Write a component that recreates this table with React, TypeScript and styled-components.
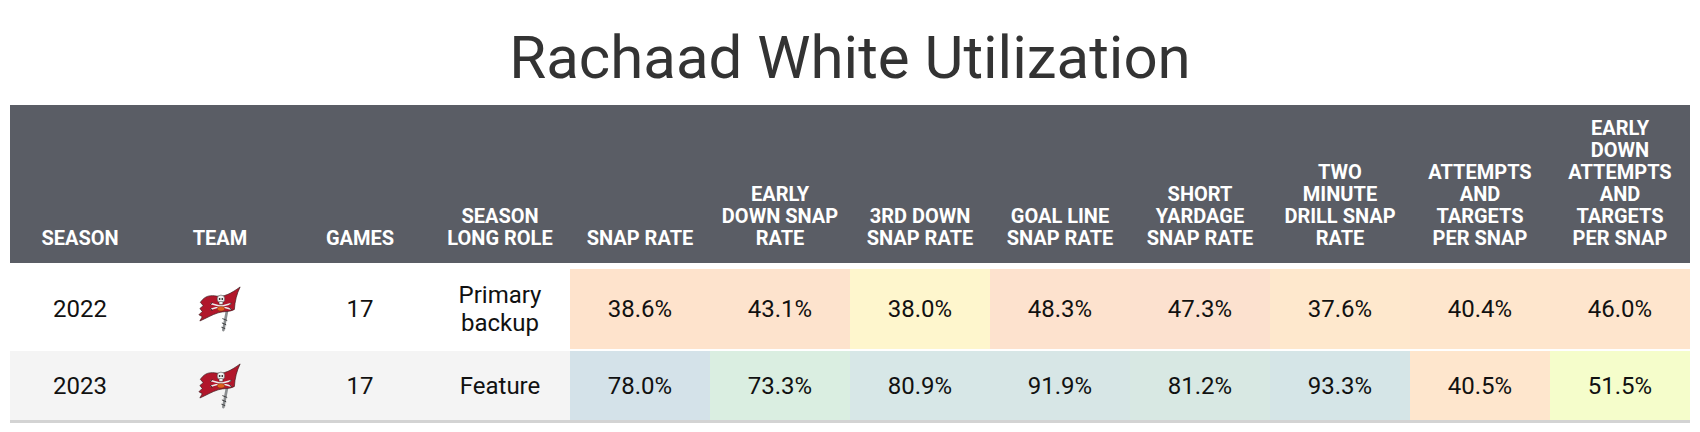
import React from 'react';
import styled, { createGlobalStyle } from 'styled-components';

const GlobalStyle = createGlobalStyle`
  body {
    margin: 0;
    background: #ffffff;
    font-family: Roboto, 'Liberation Sans', Arial, sans-serif;
  }
`;

const Page = styled.div`
  padding: 0 10px;
`;

const Title = styled.h1`
  margin: 0;
  padding-top: 22px;
  margin-bottom: 12px;
  text-align: center;
  font-family: Roboto, 'Liberation Sans', sans-serif;
  font-weight: 400;
  font-size: 60px;
  line-height: normal;
  color: #333333;
`;

const Table = styled.table`
  width: 1680px;
  table-layout: fixed;
  border-collapse: separate;
  border-spacing: 0;
  border-bottom: 3px solid #d3d3d3;
`;

const HeadCell = styled.th`
  box-sizing: border-box;
  width: 140px;
  background: #5a5d65;
  color: #ffffff;
  font-family: Roboto, 'Liberation Sans', sans-serif;
  font-weight: 700;
  font-size: 20px;
  line-height: 22px;
  text-transform: uppercase;
  text-align: center;
  vertical-align: bottom;
  padding: 12px 10px 14px;
`;

const Row = styled.tr<{ gap: number }>`
  & > td {
    border-top: ${({ gap }) => gap}px solid #ffffff;
  }
`;

const Cell = styled.td<{ bg: string }>`
  box-sizing: border-box;
  background: ${({ bg }) => bg};
  color: #111111;
  font-family: Roboto, 'Liberation Sans', sans-serif;
  font-weight: 400;
  font-size: 24px;
  line-height: 28px;
  text-align: center;
  vertical-align: middle;
  padding: 12px 10px;
`;

const LogoWrap = styled.div`
  display: flex;
  justify-content: center;
  align-items: center;
  height: 45px;
`;

const BucsLogo = () => (
  <svg width="46" height="46" viewBox="10 2 46 48">
    {/* pole / sword hilt */}
    <path d="M40.5 27 L36.5 48" stroke="#8b8e90" strokeWidth="2.8" strokeLinecap="round" />
    <path d="M35.5 36 L40.5 38 M35 40.5 L39.5 42.5 M34.5 45 L38.5 46.5" stroke="#3b3c3e" strokeWidth="1" />
    {/* flag */}
    <path
      d="M15 16 C19 12 24 11.5 29 12.5 C37 14 45 9.5 54 3 C50.5 10 48.5 18 48 26.5 C43 29.5 37 28 31 30 C24.5 32 19 35.5 12 38.5 L14.5 34 L11 32 L14.5 28.5 L12 25.5 L15.5 22.5 L12.5 19 Z"
      fill="#b1172b"
      stroke="#3a1a1c"
      strokeWidth="0.7"
    />
    {/* swords */}
    <path d="M24 26 L44 20.5 M24 20.5 L44 26" stroke="#ececec" strokeWidth="1.4" strokeLinecap="round" />
    <path d="M23 25 L25 28 M23 21.5 L25 19 M45 19.5 L43 22 M45 27 L43 24.5" stroke="#2b2b2b" strokeWidth="1" />
    {/* skull */}
    <circle cx="34" cy="15.5" r="4" fill="#f4f4f4" stroke="#2b2b2b" strokeWidth="0.5" />
    <rect x="32" y="18.2" width="4" height="3" rx="0.8" fill="#f4f4f4" stroke="#2b2b2b" strokeWidth="0.5" />
    <circle cx="32.6" cy="15.6" r="0.95" fill="#2b2b2b" />
    <circle cx="35.4" cy="15.6" r="0.95" fill="#2b2b2b" />
    {/* football */}
    <ellipse cx="34" cy="25.8" rx="4" ry="2.4" fill="#e0601f" stroke="#6a2a10" strokeWidth="0.5" />
  </svg>
);

const headers = [
  'Season',
  'Team',
  'Games',
  'Season Long Role',
  'Snap Rate',
  'Early Down Snap Rate',
  '3rd Down Snap Rate',
  'Goal Line Snap Rate',
  'Short Yardage Snap Rate',
  'Two Minute Drill Snap Rate',
  'Attempts and Targets per Snap',
  'Early Down Attempts and Targets per Snap',
];

type Stat = { value: string; color: string };

const rows: { season: string; games: string; role: string; bg: string; gap: number; stats: Stat[] }[] = [
  {
    season: '2022',
    games: '17',
    role: 'Primary backup',
    bg: '#ffffff',
    gap: 6,
    stats: [
      { value: '38.6%', color: '#fee3cc' },
      { value: '43.1%', color: '#fde3cd' },
      { value: '38.0%', color: '#fef6cd' },
      { value: '48.3%', color: '#fde2ce' },
      { value: '47.3%', color: '#fce1cf' },
      { value: '37.6%', color: '#fee8cd' },
      { value: '40.4%', color: '#fee6cd' },
      { value: '46.0%', color: '#fee5cd' },
    ],
  },
  {
    season: '2023',
    games: '17',
    role: 'Feature',
    bg: '#f4f4f4',
    gap: 2,
    stats: [
      { value: '78.0%', color: '#d4e2e9' },
      { value: '73.3%', color: '#daeee1' },
      { value: '80.9%', color: '#d7e7e7' },
      { value: '91.9%', color: '#d7e6e6' },
      { value: '81.2%', color: '#d8e8e3' },
      { value: '93.3%', color: '#d5e5e7' },
      { value: '40.5%', color: '#fee6cd' },
      { value: '51.5%', color: '#f5fdcb' },
    ],
  },
];

export default function App() {
  return (
    <Page>
      <GlobalStyle />
      <Title>Rachaad White Utilization</Title>
      <Table>
        <thead>
          <tr>
            {headers.map((h) => (
              <HeadCell key={h}>{h}</HeadCell>
            ))}
          </tr>
        </thead>
        <tbody>
          {rows.map((r) => (
            <Row key={r.season} gap={r.gap}>
              <Cell bg={r.bg}>{r.season}</Cell>
              <Cell bg={r.bg}>
                <LogoWrap>
                  <BucsLogo />
                </LogoWrap>
              </Cell>
              <Cell bg={r.bg}>{r.games}</Cell>
              <Cell bg={r.bg}>{r.role}</Cell>
              {r.stats.map((s, i) => (
                <Cell key={i} bg={s.color}>
                  {s.value}
                </Cell>
              ))}
            </Row>
          ))}
        </tbody>
      </Table>
    </Page>
  );
}
